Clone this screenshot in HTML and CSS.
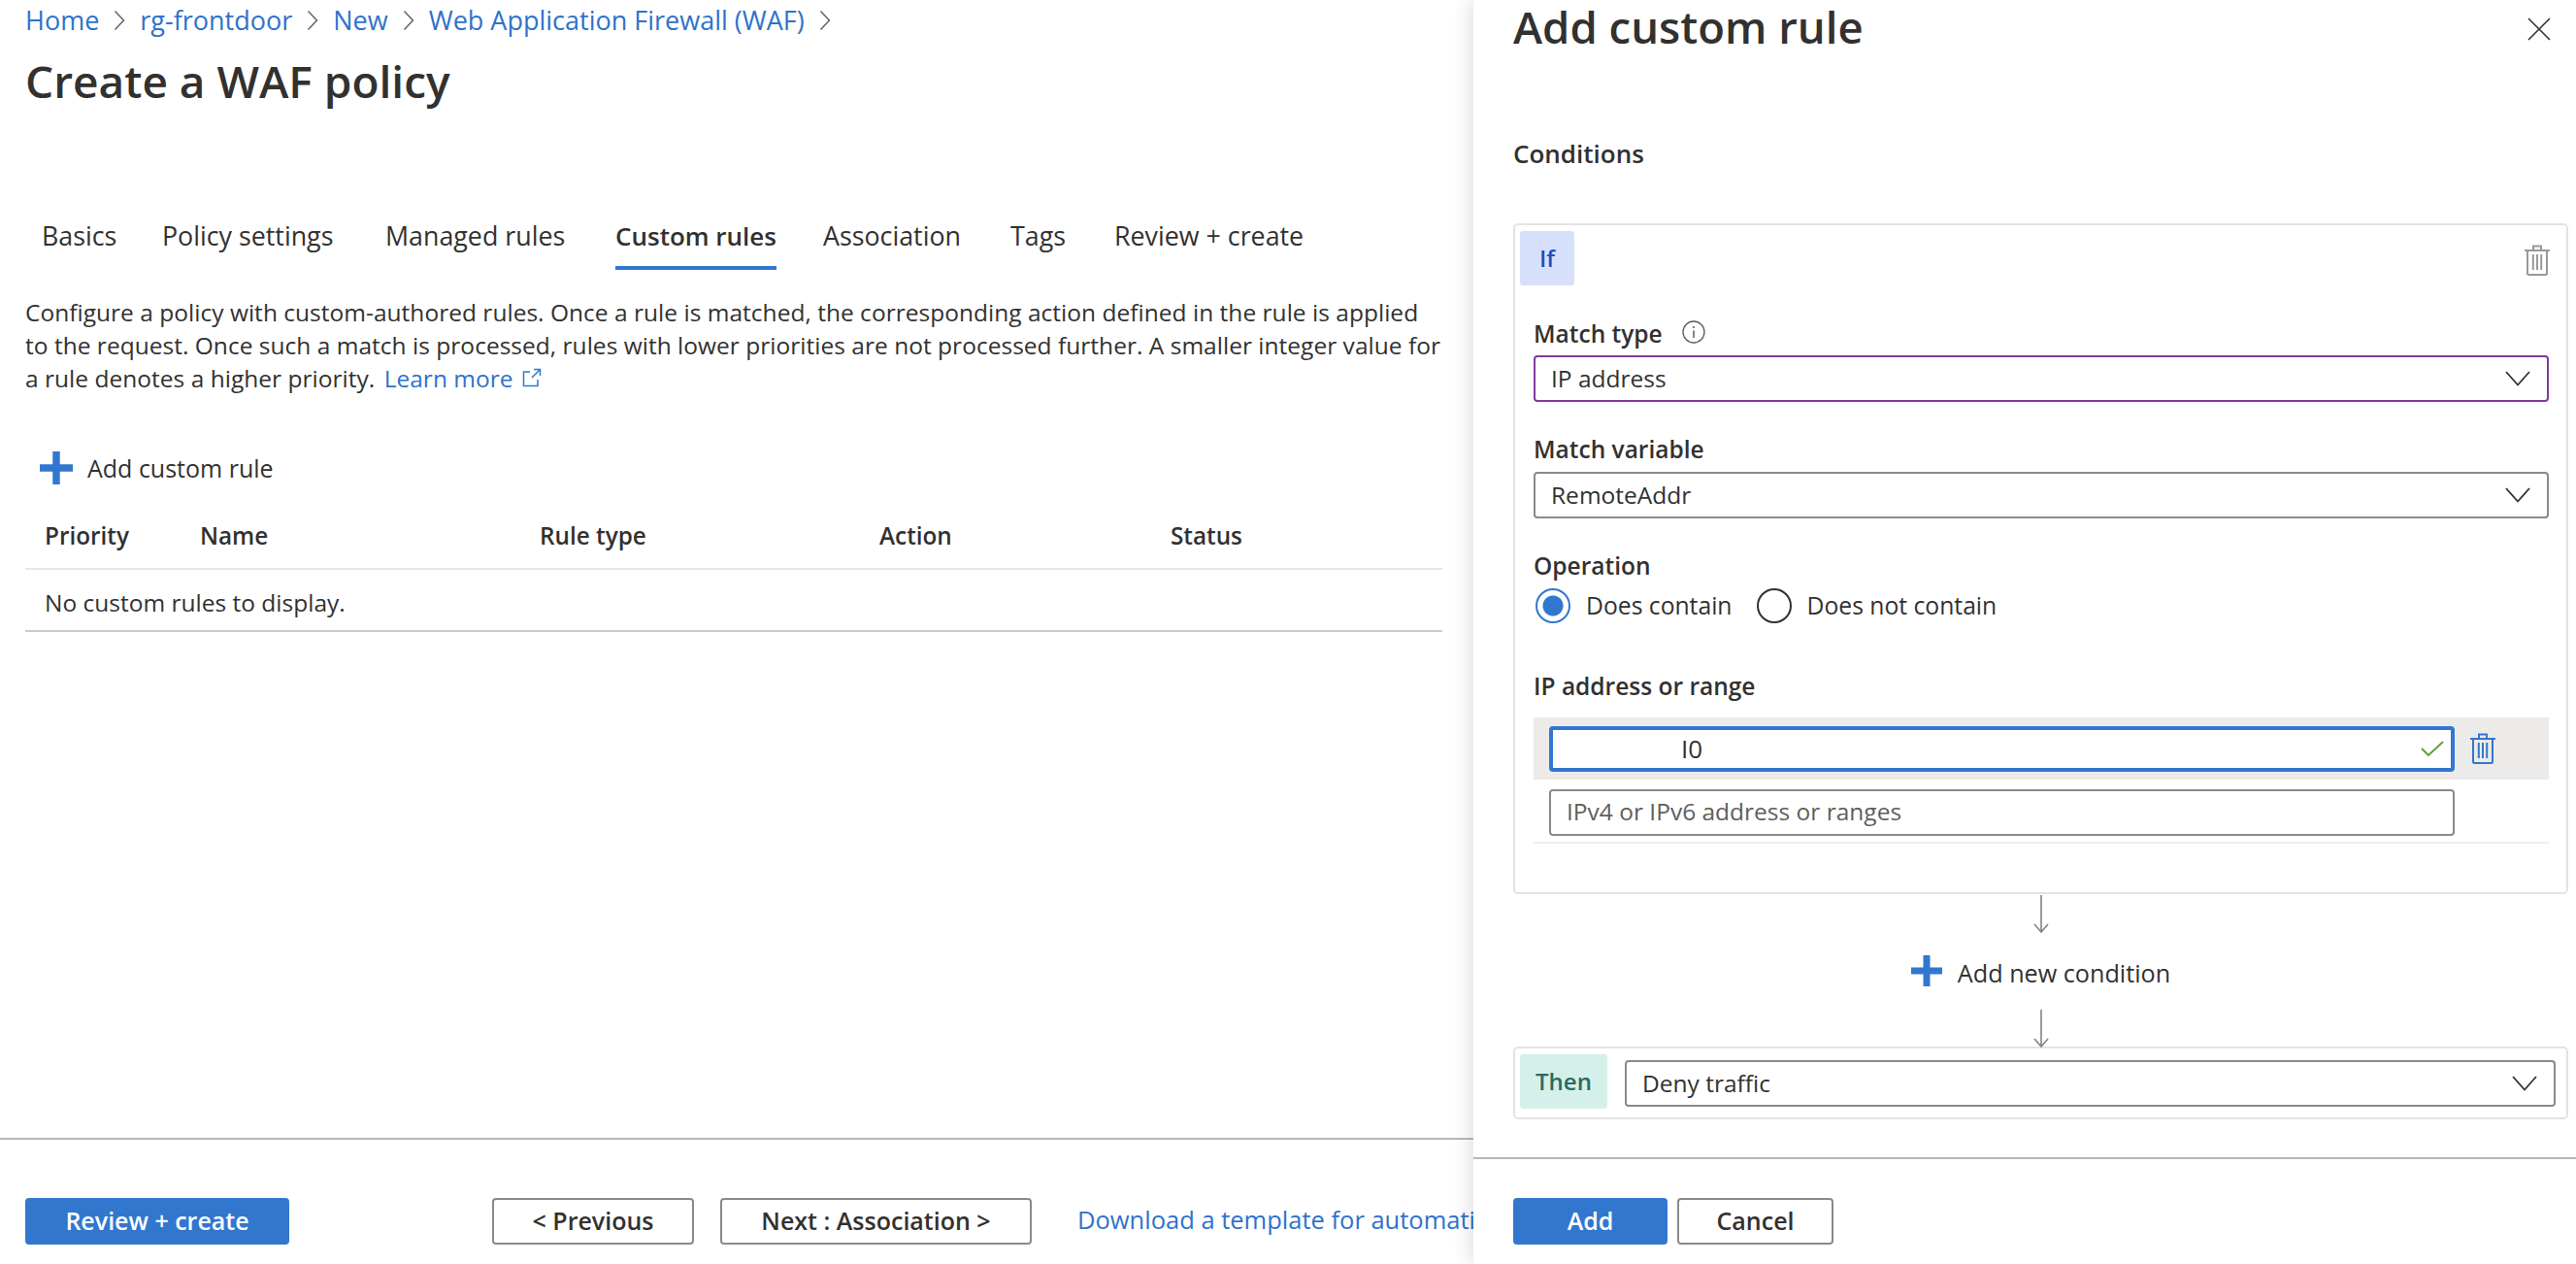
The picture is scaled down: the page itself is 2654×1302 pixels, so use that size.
FILE: index.html
```html
<!DOCTYPE html>
<html lang="en">
<head>
    <meta charset="UTF-8">
    <meta name="viewport" content="width=device-width, initial-scale=1.0">
    <title>Create a WAF policy</title>
    <link rel="stylesheet" href="styles.css">
</head>
<body>
    <svg class="icon-defs" width="0" height="0">
        <symbol id="i-crumb" viewBox="0 0 12 22"><path d="M1.5 1.5 10.5 11 1.5 20.5" fill="none" stroke="#605e5c" stroke-width="1.4"/></symbol>
        <symbol id="i-plus" viewBox="0 0 32 32"><path d="M12.5 0h7v12.5H32v7H19.500V32h-7V19.500H0v-7h12.500z" fill="#3277ce"/></symbol>
        <symbol id="i-chevron" viewBox="0 0 26 16"><path d="M1 1 13 14.500 25 1" fill="none" stroke="#323130" stroke-width="1.8"/></symbol>
        <symbol id="i-trash" viewBox="0 0 26 32"><path d="M0 6h26M9 6V1.500h8V6M3 6v23.500q0 1.500 1.500 1.500h17q1.500 0 1.500-1.500V6M8.800 10v16M13 10v16M17.200 10v16" fill="none" stroke="currentColor" stroke-width="2"/></symbol>
        <symbol id="i-arrow" viewBox="0 0 16 39"><path d="M8 0v38M1 30l7 8 7-8" fill="none" stroke="#848484" stroke-width="1.600"/></symbol>
    </svg>

    <div class="page">
        <main class="blade">
            <nav class="crumbs">
                <a href="#">Home</a><svg class="crumb-sep"><use href="#i-crumb"/></svg>
                <a href="#">rg-frontdoor</a><svg class="crumb-sep"><use href="#i-crumb"/></svg>
                <a href="#">New</a><svg class="crumb-sep"><use href="#i-crumb"/></svg>
                <a href="#">Web Application Firewall (WAF)</a><svg class="crumb-sep"><use href="#i-crumb"/></svg>
            </nav>
            <h1 class="blade-title">Create a WAF policy</h1>

            <div class="tabs">
                <div class="tab"><span>Basics</span></div>
                <div class="tab"><span>Policy settings</span></div>
                <div class="tab"><span>Managed rules</span></div>
                <div class="tab active"><span>Custom rules</span></div>
                <div class="tab"><span>Association</span></div>
                <div class="tab"><span>Tags</span></div>
                <div class="tab"><span>Review + create</span></div>
            </div>

            <p class="desc">
                Configure a policy with custom-authored rules. Once a rule is matched, the corresponding action defined in the rule is applied<br>
                to the request. Once such a match is processed, rules with lower priorities are not processed further. A smaller integer value for<br>
                a rule denotes a higher priority. <a href="#" class="learn">Learn more
                <svg class="ext-icon" viewBox="0 0 20 20"><path d="M8 4H1.500v14.500H16V12M10 10 18.500 1.500M12 1.500h6.500V8" fill="none" stroke="#3277ce" stroke-width="1.500"/></svg></a>
            </p>

            <button class="cmd-add"><svg class="plus-icon"><use href="#i-plus"/></svg>Add custom rule</button>

            <div class="rules">
                <div class="rules-row rules-head">
                    <div>Priority</div>
                    <div>Name</div>
                    <div>Rule type</div>
                    <div>Action</div>
                    <div>Status</div>
                </div>
                <div class="rules-empty">No custom rules to display.</div>
            </div>

            <footer class="blade-footer">
                <button class="btn primary btn-review">Review + create</button>
                <button class="btn btn-prev">&lt; Previous</button>
                <button class="btn btn-next">Next : Association &gt;</button>
                <a href="#" class="template-link">Download a template for automation</a>
            </footer>
        </main>

        <aside class="pane">
            <div class="pane-body">
                <div class="pane-head">
                    <h2 class="pane-title">Add custom rule</h2>
                    <svg class="close-icon" viewBox="0 0 24 24"><path d="M1 1 23 23M23 1 1 23" fill="none" stroke="#323130" stroke-width="1.600"/></svg>
                </div>
                <h3 class="section-title">Conditions</h3>

                <section class="card if-card">
                    <div class="card-top">
                        <div class="chip chip-if">If</div>
                        <svg class="trash trash-grey"><use href="#i-trash"/></svg>
                    </div>
                    <div class="fields">
                        <label class="field-label first">Match type
                            <svg class="info-icon" viewBox="0 0 24 24"><circle cx="12" cy="12" r="11" fill="none" stroke="#605e5c" stroke-width="1.300"/><path d="M12 10.500v7.500M12 6v2" fill="none" stroke="#605e5c" stroke-width="1.500"/></svg>
                        </label>
                        <div class="select focused"><span>IP address</span><svg class="chevron"><use href="#i-chevron"/></svg></div>

                        <label class="field-label var-label">Match variable</label>
                        <div class="select select-var"><span>RemoteAddr</span><svg class="chevron"><use href="#i-chevron"/></svg></div>

                        <label class="field-label op-label">Operation</label>
                        <div class="radios">
                            <div class="radio checked"></div><span class="radio-text">Does contain</span>
                            <div class="radio"></div><span class="radio-text">Does not contain</span>
                        </div>

                        <label class="field-label ip-label">IP address or range</label>
                        <div class="ip-row filled">
                            <div class="text-input active">
                                <span class="ip-value">I0</span>
                                <svg class="check-icon" viewBox="0 0 24 16"><path d="M1 8 8 15 23 1" fill="none" stroke="#5c9e31" stroke-width="1.800"/></svg>
                            </div>
                            <svg class="trash trash-blue"><use href="#i-trash"/></svg>
                        </div>
                        <div class="ip-row blank">
                            <div class="text-input"><span class="placeholder">IPv4 or IPv6 address or ranges</span></div>
                        </div>
                    </div>
                </section>

                <svg class="connector first-arrow"><use href="#i-arrow"/></svg>
                <button class="add-condition"><svg class="plus-icon"><use href="#i-plus"/></svg>Add new condition</button>
                <svg class="connector second-arrow"><use href="#i-arrow"/></svg>

                <section class="card then-card">
                    <div class="chip chip-then">Then</div>
                    <div class="select select-then"><span>Deny traffic</span><svg class="chevron"><use href="#i-chevron"/></svg></div>
                </section>
            </div>

            <footer class="pane-footer">
                <button class="btn primary btn-add">Add</button>
                <button class="btn btn-cancel">Cancel</button>
            </footer>
        </aside>
    </div>
</body>
</html>
```

FILE: styles.css
```css
* {
    box-sizing: border-box;
}

body {
    margin: 0;
    font-family: "Open Sans", "Noto Sans", sans-serif;
    font-size: 24.5px;
    line-height: 34px;
    color: #323130;
    background-color: #fff;
    overflow: hidden;
}

a {
    color: #2f72cc;
    text-decoration: none;
}

button {
    font: inherit;
    color: inherit;
    background: none;
    border: 0;
    padding: 0;
}

.icon-defs {
    position: absolute;
}

.page {
    display: flex;
    height: 100vh;
}

/* left blade */
.blade {
    width: 1518px;
    flex-shrink: 0;
    display: flex;
    flex-direction: column;
    overflow: hidden;
    white-space: nowrap;
}

.crumbs {
    display: flex;
    align-items: center;
    height: 42px;
    padding-left: 26px;
    font-size: 27px;
}

.crumb-sep {
    width: 12px;
    height: 22px;
    margin: 0 15px;
}

.blade-title {
    margin: 13px 0 0 26px;
    font-size: 46px;
    line-height: 56px;
    font-weight: 600;
}

.tabs {
    display: grid;
    grid-template-columns: 124px 230px 237px 214px 193px 107px auto;
    margin: 115px 0 0 43px;
    font-size: 26.8px;
}

.tab span {
    display: inline-block;
    padding-bottom: 14px;
    border-bottom: 4px solid transparent;
}

.tab.active span {
    font-size: 26px;
    font-weight: 600;
    border-bottom-color: #3277ce;
}

.desc {
    margin: 27px 0 0 26px;
    letter-spacing: 0.02px;
}

.learn {
    margin-left: 3px;
}

.ext-icon {
    width: 20px;
    height: 20px;
    margin-left: 3px;
}

.cmd-add {
    display: flex;
    align-items: center;
    height: 48px;
    margin: 51px 0 0 41px;
    font-size: 25px;
}

.plus-icon {
    width: 34px;
    height: 34px;
    margin-right: 15px;
}

.rules {
    margin: 13px 0 0 26px;
    width: 1460px;
}

.rules-row {
    display: grid;
    grid-template-columns: 160px 350px 350px 300px 1fr;
    padding-left: 20px;
}

.rules-head {
    height: 68px;
    align-items: center;
    font-weight: 600;
    font-size: 24.3px;
    border-bottom: 2px solid #e6e6e6;
}

.rules-empty {
    height: 64px;
    padding: 17px 0 0 20px;
    border-bottom: 2px solid #ccc;
}

.blade-footer {
    display: flex;
    align-items: flex-start;
    height: 130px;
    margin-top: auto;
    padding: 60px 0 0 26px;
    border-top: 2px solid #b8b8b8;
}

.btn {
    flex: none;
    height: 48px;
    padding-bottom: 2px;
    border: 2px solid #8a8a8a;
    border-radius: 4px;
    font-size: 25px;
    font-weight: 600;
    background-color: #fff;
}

.btn.primary {
    background-color: #3277ce;
    border-color: #3277ce;
    color: #fff;
}

.btn-review {
    width: 272px;
}

.btn-prev {
    width: 208px;
    margin-left: 209px;
}

.btn-next {
    width: 321px;
    margin-left: 27px;
}

.template-link {
    margin: 5px 0 0 47px;
    font-size: 25.5px;
}

/* add custom rule pane */
.pane {
    flex: 1;
    display: flex;
    flex-direction: column;
    box-shadow: -6px 0 16px rgba(0, 0, 0, 0.1);
    background-color: #fff;
    z-index: 1;
}

.pane-body {
    display: flex;
    flex-direction: column;
    padding: 0 8px 0 41px;
}

.pane-head {
    display: flex;
    justify-content: space-between;
    align-items: flex-start;
    height: 60px;
}

.pane-title {
    margin: -3px 0 0;
    font-size: 45.5px;
    line-height: 60px;
    font-weight: 600;
}

.close-icon {
    width: 24px;
    height: 24px;
    margin: 18px 18px 0 0;
}

.section-title {
    margin: 81px 0 0;
    font-size: 26px;
    line-height: 34px;
    font-weight: 600;
}

.card {
    border: 2px solid #e3e3e3;
    border-radius: 5px;
}

.if-card {
    height: 691px;
    margin-top: 55px;
    padding: 6px 0 0 5px;
}

.card-top {
    display: flex;
    justify-content: space-between;
    align-items: center;
}

.chip {
    height: 56px;
    border-radius: 3px;
    font-size: 24px;
    font-weight: 600;
    display: flex;
    align-items: center;
    justify-content: center;
}

.chip-if {
    width: 56px;
    background-color: #d7e0fb;
    color: #1d4fbf;
}

.chip-then {
    width: 90px;
    background-color: #d5f0ea;
    color: #2a6b5e;
}

.trash {
    width: 26px;
    height: 32px;
}

.trash-grey {
    color: #999;
    margin: 4px 17px 0 0;
}

.trash-blue {
    color: #3277ce;
    margin-left: 16px;
}

.fields {
    padding: 0 18px 0 14px;
}

.field-label {
    display: flex;
    align-items: center;
    font-weight: 600;
}

.field-label.first {
    margin-top: 33px;
}

.info-icon {
    width: 24px;
    height: 24px;
    margin: -4px 0 0 20px;
}

.var-label {
    margin-top: 32px;
}

.op-label {
    margin-top: 32px;
}

.ip-label {
    margin-top: 48px;
}

.select {
    display: flex;
    align-items: center;
    justify-content: space-between;
    height: 48px;
    margin-top: 5px;
    padding: 0 17px 0 16px;
    border: 2px solid #8a8a8a;
    border-radius: 4px;
}

.select.focused {
    border-color: #7f3a9e;
}

.select-var {
    margin-top: 6px;
}

.chevron {
    width: 26px;
    height: 16px;
}

.radios {
    display: flex;
    align-items: center;
    height: 36px;
    margin-top: 6px;
    padding-left: 2px;
}

.radio {
    width: 36px;
    height: 36px;
    border: 2px solid #323130;
    border-radius: 50%;
}

.radio.checked {
    border-color: #3277ce;
    background: radial-gradient(circle, #3277ce 0 10px, #fff 11px);
}

.radio-text {
    margin: 0 25px 0 16px;
    font-size: 24.7px;
}

.ip-row {
    display: flex;
    align-items: center;
    padding: 10px 0 0 16px;
}

.ip-row.filled {
    height: 64px;
    margin-top: 15px;
    padding-top: 0;
    background-color: #ecebe9;
}

.ip-row.blank {
    height: 66px;
    align-items: flex-start;
    border-bottom: 2px solid #f0f0f0;
}

.text-input {
    display: flex;
    align-items: center;
    width: 933px;
    height: 48px;
    padding: 0 16px;
    border: 2px solid #8a8a8a;
    border-radius: 4px;
    background-color: #fff;
}

.text-input.active {
    border: 4px solid #3277ce;
    height: 47px;
    padding-right: 7px;
}

.ip-value {
    margin-left: 116px;
    font-size: 26px;
}

.check-icon {
    width: 24px;
    height: 16px;
    margin-left: auto;
}

.placeholder {
    color: #605e5c;
    margin-top: -2px;
}

.connector {
    display: block;
    align-self: center;
    width: 16px;
    height: 39px;
    position: relative;
    z-index: 1;
}

.first-arrow {
    margin-top: 1px;
}

.add-condition {
    display: flex;
    align-items: center;
    align-self: center;
    height: 32px;
    margin-top: 23px;
    padding-top: 3px;
    font-size: 25.2px;
}

.add-condition .plus-icon {
    width: 32px;
    height: 32px;
    margin: -3px 16px 0 0;
}

.second-arrow {
    margin: 24px 0 -1px;
}

.then-card {
    display: flex;
    align-items: flex-start;
    height: 75px;
    padding: 6px 11px 0 5px;
}

.select-then {
    flex: 1;
    margin: 6px 0 0 18px;
}

.pane-footer {
    display: flex;
    align-items: flex-start;
    gap: 10px;
    height: 110px;
    margin-top: auto;
    padding: 40px 0 0 41px;
    border-top: 2px solid #b8b8b8;
}

.btn-add {
    width: 159px;
}

.btn-cancel {
    width: 161px;
}
```
